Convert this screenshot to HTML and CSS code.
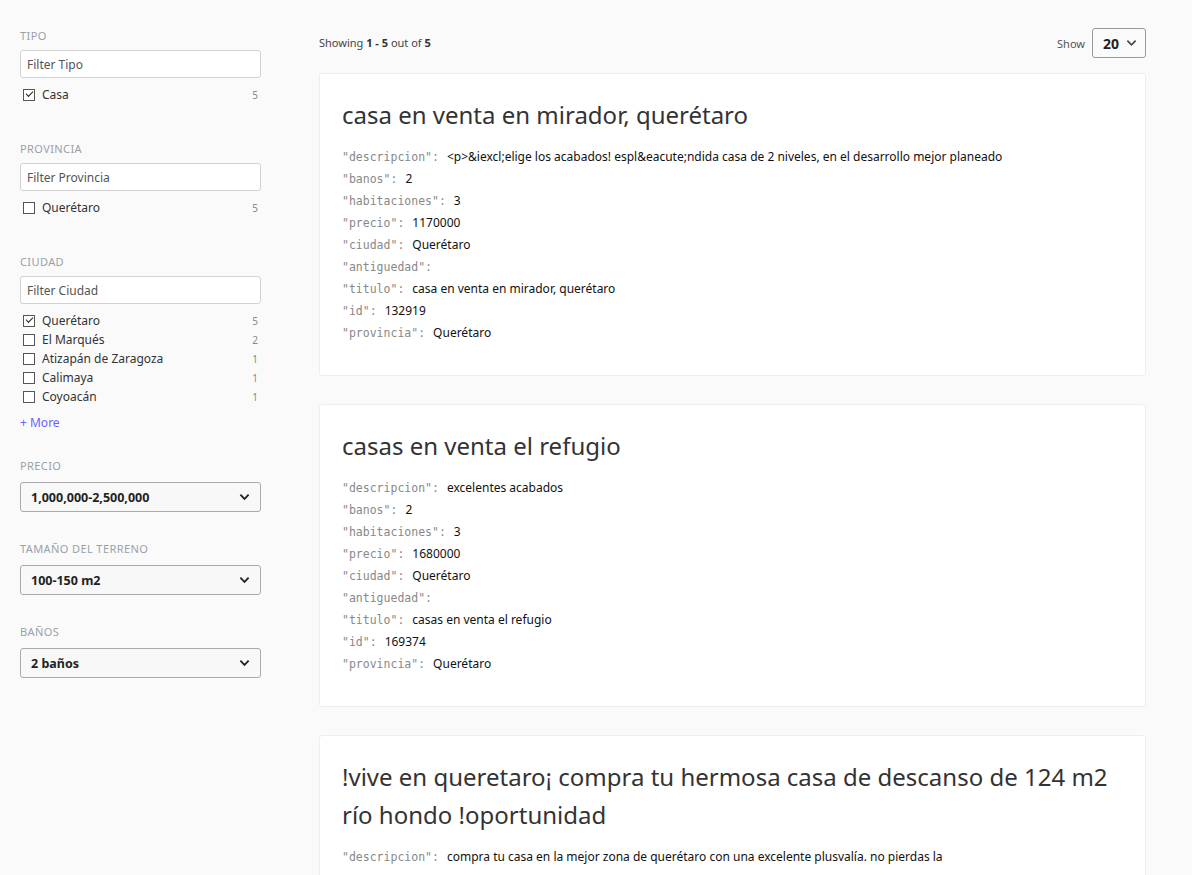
FILE: index.html
```html
<!DOCTYPE html>
<html lang="es">
<head>
<meta charset="utf-8">
<title>Search</title>
<link rel="stylesheet" href="styles.css">
</head>
<body>
<div class="page">
  <aside class="sidebar">
    <section class="facet">
      <h4 class="facet-title">TIPO</h4>
      <input class="facet-input" type="text" placeholder="Filter Tipo">
      <ul class="facet-list">
        <li class="facet-item"><span class="cb checked"></span><span class="facet-label">Casa</span><span class="facet-count">5</span></li>
      </ul>
    </section>
    <section class="facet">
      <h4 class="facet-title">PROVINCIA</h4>
      <input class="facet-input" type="text" placeholder="Filter Provincia">
      <ul class="facet-list">
        <li class="facet-item"><span class="cb"></span><span class="facet-label">Querétaro</span><span class="facet-count">5</span></li>
      </ul>
    </section>
    <section class="facet facet-more">
      <h4 class="facet-title">CIUDAD</h4>
      <input class="facet-input" type="text" placeholder="Filter Ciudad">
      <ul class="facet-list">
        <li class="facet-item"><span class="cb checked"></span><span class="facet-label">Querétaro</span><span class="facet-count">5</span></li>
        <li class="facet-item"><span class="cb"></span><span class="facet-label">El Marqués</span><span class="facet-count">2</span></li>
        <li class="facet-item"><span class="cb"></span><span class="facet-label">Atizapán de Zaragoza</span><span class="facet-count">1</span></li>
        <li class="facet-item"><span class="cb"></span><span class="facet-label">Calimaya</span><span class="facet-count">1</span></li>
        <li class="facet-item"><span class="cb"></span><span class="facet-label">Coyoacán</span><span class="facet-count">1</span></li>
      </ul>
      <a class="more" href="#">+ More</a>
    </section>
    <section class="facet facet-select">
      <h4 class="facet-title">PRECIO</h4>
      <div class="select"><span>1,000,000-2,500,000</span><svg class="chev" viewBox="0 0 12 8" width="11" height="8"><path d="M1.5 1.5 L6 6 L10.5 1.5" fill="none" stroke="#222" stroke-width="2"/></svg></div>
    </section>
    <section class="facet facet-select">
      <h4 class="facet-title">TAMAÑO DEL TERRENO</h4>
      <div class="select"><span>100-150 m2</span><svg class="chev" viewBox="0 0 12 8" width="11" height="8"><path d="M1.5 1.5 L6 6 L10.5 1.5" fill="none" stroke="#222" stroke-width="2"/></svg></div>
    </section>
    <section class="facet facet-select">
      <h4 class="facet-title">BAÑOS</h4>
      <div class="select"><span>2 baños</span><svg class="chev" viewBox="0 0 12 8" width="11" height="8"><path d="M1.5 1.5 L6 6 L10.5 1.5" fill="none" stroke="#222" stroke-width="2"/></svg></div>
    </section>
  </aside>

  <main class="main">
    <div class="topbar">
      <div class="summary">Showing <b>1 - 5</b> out of <b>5</b></div>
      <div class="show">Show <div class="show-select"><b>20</b><svg viewBox="0 0 12 8" width="11" height="8"><path d="M1.5 1.5 L6 6 L10.5 1.5" fill="none" stroke="#444" stroke-width="1.8"/></svg></div></div>
    </div>

    <article class="card">
      <h2 class="card-title">casa en venta en mirador, querétaro</h2>
      <dl class="props">
        <div class="prop"><dt>"descripcion":</dt><dd>&lt;p&gt;&amp;iexcl;elige los acabados! espl&amp;eacute;ndida casa de 2 niveles, en el desarrollo mejor planeado</dd></div>
        <div class="prop"><dt>"banos":</dt><dd>2</dd></div>
        <div class="prop"><dt>"habitaciones":</dt><dd>3</dd></div>
        <div class="prop"><dt>"precio":</dt><dd>1170000</dd></div>
        <div class="prop"><dt>"ciudad":</dt><dd>Querétaro</dd></div>
        <div class="prop"><dt>"antiguedad":</dt><dd></dd></div>
        <div class="prop"><dt>"titulo":</dt><dd>casa en venta en mirador, querétaro</dd></div>
        <div class="prop"><dt>"id":</dt><dd>132919</dd></div>
        <div class="prop"><dt>"provincia":</dt><dd>Querétaro</dd></div>
      </dl>
    </article>

    <article class="card">
      <h2 class="card-title">casas en venta el refugio</h2>
      <dl class="props">
        <div class="prop"><dt>"descripcion":</dt><dd>excelentes acabados</dd></div>
        <div class="prop"><dt>"banos":</dt><dd>2</dd></div>
        <div class="prop"><dt>"habitaciones":</dt><dd>3</dd></div>
        <div class="prop"><dt>"precio":</dt><dd>1680000</dd></div>
        <div class="prop"><dt>"ciudad":</dt><dd>Querétaro</dd></div>
        <div class="prop"><dt>"antiguedad":</dt><dd></dd></div>
        <div class="prop"><dt>"titulo":</dt><dd>casas en venta el refugio</dd></div>
        <div class="prop"><dt>"id":</dt><dd>169374</dd></div>
        <div class="prop"><dt>"provincia":</dt><dd>Querétaro</dd></div>
      </dl>
    </article>

    <article class="card">
      <h2 class="card-title">!vive en queretaro¡ compra tu hermosa casa de descanso de 124 m2 río hondo !oportunidad</h2>
      <dl class="props">
        <div class="prop"><dt>"descripcion":</dt><dd>compra tu casa en la mejor zona de querétaro con una excelente plusvalía. no pierdas la</dd></div>
      </dl>
    </article>
  </main>
</div>
</body>
</html>
```

FILE: styles.css
```css
html, body {
  margin: 0;
  padding: 0;
  background: #fafafa;
  font-family: "Noto Sans", "Open Sans", sans-serif;
  color: #222;
}

body {
  height: 875px;
  overflow: hidden;
}

.page {
  display: flex;
  align-items: flex-start;
  padding: 0 46px 0 20px;
  gap: 58px;
}

.sidebar {
  width: 241px;
  flex: none;
  padding-top: 29px;
}

.facet {
  margin-bottom: 38px;
}

.facet-more {
  margin-bottom: 27px;
}

.facet-select {
  margin-bottom: 30px;
}

.facet-title {
  margin: 0 0 7px;
  font-size: 11px;
  font-weight: 400;
  letter-spacing: 0.4px;
  color: #98a1ab;
  line-height: 14px;
}

.facet-input {
  display: block;
  box-sizing: border-box;
  width: 100%;
  height: 28px;
  padding: 0 6px;
  border: 1px solid #d2d2d2;
  border-radius: 3px;
  background: #fff;
  font-family: inherit;
  font-size: 12px;
  color: #333;
  outline: none;
}

.facet-input::placeholder {
  color: #555;
}

.facet-list {
  list-style: none;
  margin: 7px 0 0;
  padding: 0;
}

.facet-item {
  display: flex;
  align-items: center;
  height: 19px;
  font-size: 12px;
  color: #333;
}

.cb {
  box-sizing: border-box;
  width: 12px;
  height: 12px;
  border: 1px solid #555;
  background: #fff;
  margin: 0 7px 0 3px;
  flex: none;
  position: relative;
}

.cb.checked::after {
  content: "";
  position: absolute;
  left: 2px;
  top: 1px;
  width: 6px;
  height: 3px;
  border-left: 1.3px solid #222;
  border-bottom: 1.3px solid #222;
  transform: rotate(-45deg);
}

.facet-label {
  flex: 1;
}

.facet-count {
  font-size: 10px;
  color: #888;
  margin-right: 3px;
}

.more {
  display: inline-block;
  margin-top: 8px;
  font-size: 12px;
  color: #6c63ff;
  text-decoration: none;
}

.select {
  box-sizing: border-box;
  height: 30px;
  margin-top: 9px;
  border: 1px solid #aaa;
  border-radius: 3px;
  background: #f8f8f8;
  display: flex;
  align-items: center;
  justify-content: space-between;
  padding: 0 10px 0 10px;
  font-size: 12.5px;
  font-weight: 700;
  color: #222;
}

.main {
  flex: 1;
  min-width: 0;
  padding-top: 28px;
}

.topbar {
  display: flex;
  justify-content: space-between;
  align-items: center;
  height: 30px;
  margin-bottom: 15px;
}

.summary {
  font-size: 11px;
  color: #444;
  margin-top: -1px;
}

.summary b {
  font-weight: 700;
  color: #333;
}

.show {
  display: flex;
  align-items: center;
  gap: 7px;
  font-size: 11px;
  color: #555;
}

.show-select {
  box-sizing: border-box;
  height: 30px;
  width: 54px;
  border: 1px solid #999;
  border-radius: 3px;
  background: #fafafa;
  display: flex;
  align-items: center;
  justify-content: space-between;
  padding: 0 8px 0 10px;
  font-size: 14px;
  color: #222;
}

.card {
  background: #fff;
  border: 1px solid #eee;
  border-radius: 3px;
  padding: 22px 22px 31px;
  margin-bottom: 28px;
}

.card-title {
  margin: 0 0 12px;
  font-size: 24px;
  font-weight: 400;
  line-height: 38px;
  color: #333;
}

.props {
  margin: 0;
}

.prop {
  display: flex;
  align-items: baseline;
  height: 22px;
  line-height: 22px;
}

.prop dt {
  font-family: "DejaVu Sans Mono", "Liberation Mono", monospace;
  font-size: 11.5px;
  color: #888;
  margin-right: 8px;
}

.prop dd {
  margin: 0;
  font-size: 12px;
  color: #111;
}
```
